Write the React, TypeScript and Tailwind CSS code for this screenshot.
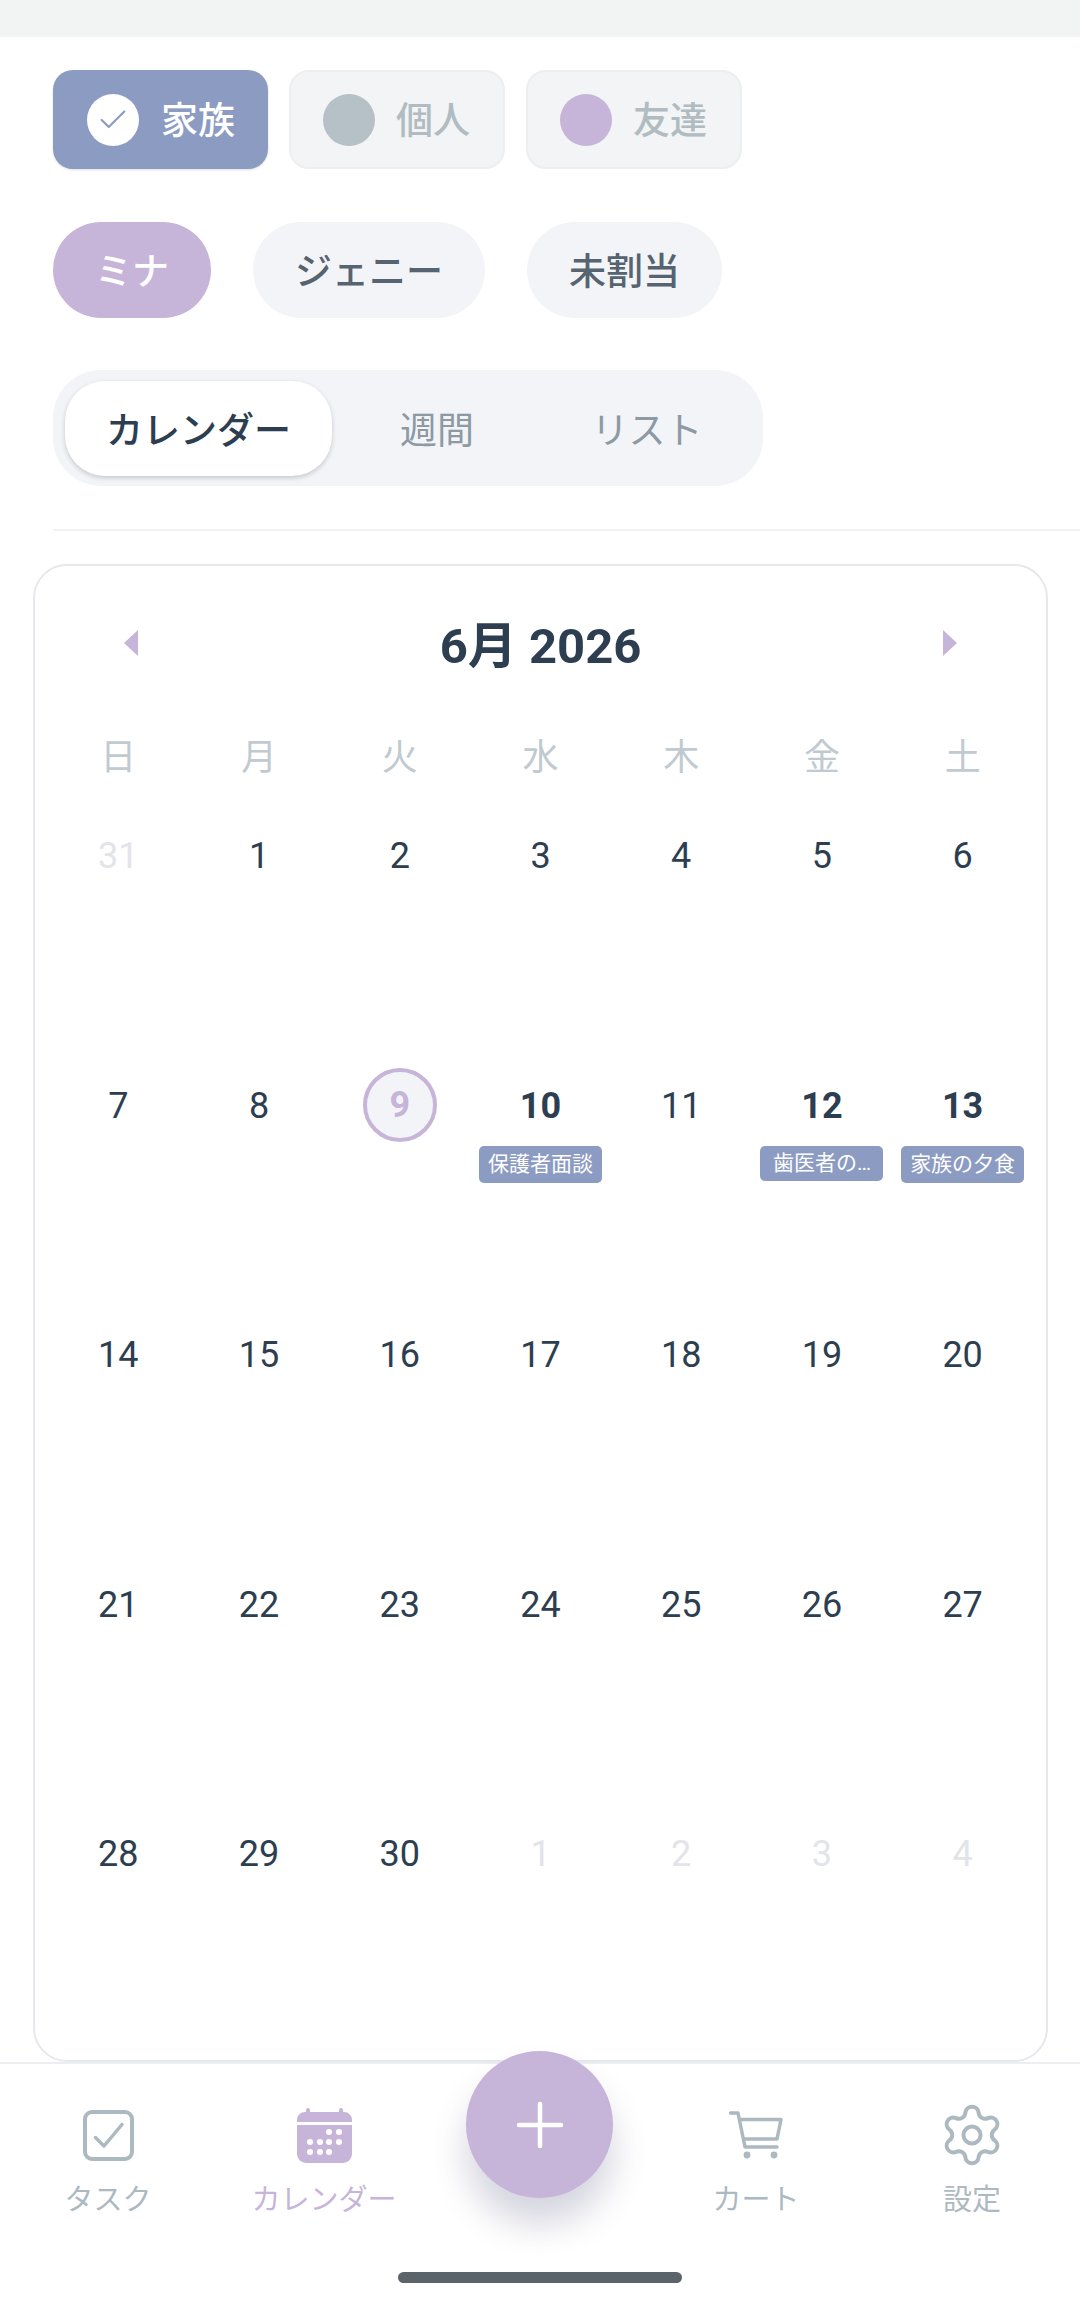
import { Check, Plus, Settings } from 'lucide-react';

const WEEKDAYS = ['日', '月', '火', '水', '木', '金', '土'];

type Day = { n: number; muted?: boolean; bold?: boolean; today?: boolean; tag?: string };

const DAYS: Day[] = [
  { n: 31, muted: true },
  ...[1, 2, 3, 4, 5, 6, 7, 8].map(n => ({ n })),
  { n: 9, today: true },
  { n: 10, bold: true, tag: '保護者面談' },
  { n: 11 },
  { n: 12, bold: true, tag: '歯医者の…' },
  { n: 13, bold: true, tag: '家族の夕食' },
  ...Array.from({ length: 17 }, (_, i) => ({ n: i + 14 })),
  ...[1, 2, 3, 4].map(n => ({ n, muted: true })),
];

function CalendarIcon() {
  return (
    <svg width="55" height="55" viewBox="0 0 55 55" fill="#c7b4d9">
      <path d="M9 2a2 2 0 0 1 4 0v2h29V2a2 2 0 0 1 4 0v2h1a8 8 0 0 1 8 8v2H0v-2a8 8 0 0 1 8-8h1z" />
      <path d="M0 17h55v29a9 9 0 0 1-9 9H9a9 9 0 0 1-9-9z" />
      <g fill="#fff">
        <circle cx="32" cy="24" r="3" />
        <circle cx="42" cy="24" r="3" />
        <circle cx="13" cy="34" r="3" />
        <circle cx="23" cy="34" r="3" />
        <circle cx="32" cy="34" r="3" />
        <circle cx="42" cy="34" r="3" />
        <circle cx="13" cy="44" r="3" />
        <circle cx="23" cy="44" r="3" />
        <circle cx="32" cy="44" r="3" />
      </g>
    </svg>
  );
}

function TaskIcon() {
  return (
    <svg width="51" height="51" viewBox="0 0 51 51" fill="none" stroke="#adb9c1" strokeWidth="4">
      <rect x="2" y="2" width="47" height="47" rx="7" />
      <path d="M12.5 27.5l8.5 8.5 18-21.5" strokeLinecap="round" strokeLinejoin="round" strokeWidth="3.5" />
    </svg>
  );
}

function CartIcon() {
  return (
    <svg width="54" height="48" viewBox="0 0 54 48" fill="none" stroke="#adb9c1" strokeWidth="3.5" strokeLinecap="round" strokeLinejoin="round">
      <path d="M1.5 2H9l7 34h32" />
      <path d="M11 8.5h41L48 28H14.5" />
      <circle cx="18" cy="44" r="3.4" fill="#adb9c1" stroke="none" />
      <circle cx="45" cy="44" r="3.4" fill="#adb9c1" stroke="none" />
    </svg>
  );
}

function NavItem({ label, icon, active }: { label: string; icon: React.ReactNode; active?: boolean }) {
  return (
    <div className="flex w-[216px] flex-col items-center">
      <div className="flex h-[60px] items-center justify-center">{icon}</div>
      <span className={'mt-[17px] text-[29px] leading-[36px] ' + (active ? 'text-[#c7b4d9]' : 'text-[#adb9c1]')}>
        {label}
      </span>
    </div>
  );
}

export default function App() {
  return (
    <div
      className="relative flex h-[2310px] w-[1080px] flex-col overflow-hidden bg-white"
      style={{ fontFamily: 'Roboto, "Noto Sans CJK JP", sans-serif' }}
    >
      <div className="h-[37px] bg-[#f2f4f3]" />

      <div className="mt-[33px] flex gap-[21px] pl-[53px]">
        <div className="flex h-[99px] w-[215px] items-center gap-[22px] rounded-[20px] bg-[#8c9bc2] pl-[34px] shadow-sm">
          <span className="flex h-[52px] w-[52px] items-center justify-center rounded-full bg-white">
            <Check size={34} strokeWidth={1.5} className="text-[#8c9bc2]" />
          </span>
          <span className="mt-[3px] text-[37px] font-medium leading-none text-white">家族</span>
        </div>
        <div className="flex h-[99px] w-[216px] items-center gap-[21px] rounded-[20px] border-2 border-[#eceeef] bg-[#f2f4f5] pl-[32px]">
          <span className="h-[52px] w-[52px] rounded-full bg-[#b5c1c7]" />
          <span className="mt-[3px] text-[37px] font-medium leading-none text-[#b0bcc2]">個人</span>
        </div>
        <div className="flex h-[99px] w-[216px] items-center gap-[21px] rounded-[20px] border-2 border-[#eceeef] bg-[#f2f4f5] pl-[32px]">
          <span className="h-[52px] w-[52px] rounded-full bg-[#c7b4d9]" />
          <span className="mt-[3px] text-[37px] font-medium leading-none text-[#b0bcc2]">友達</span>
        </div>
      </div>

      <div className="mt-[53px] flex gap-[42px] pl-[53px]">
        <div className="flex h-[96px] w-[158px] items-center justify-center rounded-[48px] bg-[#c7b4d9] pt-[6px] text-[37px] font-medium text-white">
          ミナ
        </div>
        <div className="flex h-[96px] w-[232px] items-center justify-center rounded-[48px] bg-[#f3f4f8] pt-[6px] text-[37px] font-medium text-[#566370]">
          ジェニー
        </div>
        <div className="flex h-[96px] w-[195px] items-center justify-center rounded-[48px] bg-[#f3f4f8] pt-[6px] text-[37px] font-medium text-[#566370]">
          未割当
        </div>
      </div>

      <div className="mt-[52px] ml-[53px] flex h-[116px] w-[710px] items-center rounded-[48px] bg-[#f3f4f8] pl-[12px]">
        <div className="flex h-[95px] w-[267px] items-center justify-center rounded-[40px] bg-white pt-[8px] text-[37px] font-medium text-[#2c3e50] shadow-[0_2px_5px_rgba(0,0,0,0.18)]">
          カレンダー
        </div>
        <div className="flex h-[95px] w-[210px] items-center justify-center pt-[8px] text-[37px] text-[#8d99a3]">週間</div>
        <div className="flex h-[95px] w-[210px] items-center justify-center pt-[8px] text-[37px] text-[#8d99a3]">リスト</div>
      </div>

      <div className="mt-[43px] ml-[53px] h-[2px] bg-[#f0f1f3]" />

      <div className="mt-[33px] mx-[33px] h-[1498px] w-[1015px] rounded-[34px] border-2 border-[#e6e8ec] px-[13px]">
        <div className="flex h-[155px] items-center justify-between px-[76px] pb-[1px]">
          <svg width="14" height="26" viewBox="0 0 14 26" fill="#c7b4d9">
            <path d="M14 0v26L0 13z" />
          </svg>
          <span className="mt-[6px] text-[49px] font-bold leading-none text-[#2c3e50]">6月 2026</span>
          <svg width="14" height="26" viewBox="0 0 14 26" fill="#c7b4d9">
            <path d="M0 0v26l14-13z" />
          </svg>
        </div>

        <div className="grid h-[74px] grid-cols-7 items-center">
          {WEEKDAYS.map(d => (
            <span key={d} className="text-center text-[36px] leading-none text-[#c0cad0]">
              {d}
            </span>
          ))}
        </div>

        <div className="mt-[23.5px] grid grid-cols-7 auto-rows-[249.5px]">
          {DAYS.map((d, i) => (
            <div key={i} className="flex flex-col items-center">
              {d.today ? (
                <div className="flex h-[74px] w-[74px] items-center justify-center rounded-full border-4 border-[#c7b4d9] bg-[#f3f4f8] text-[36px] font-bold text-[#c7b4d9]">
                  {d.n}
                </div>
              ) : (
                <div
                  className={
                    'flex h-[75px] items-center justify-center text-[36px] ' +
                    (d.muted ? 'text-[#e2e4e9] ' : 'text-[#2c3e50] ') +
                    (d.bold ? 'font-bold' : '')
                  }
                >
                  {d.n}
                </div>
              )}
              {d.tag && (
                <div
                  className={
                    'mt-[3px] flex w-[123px] items-center justify-center overflow-hidden whitespace-nowrap rounded-[5px] bg-[#8c9bc2] text-[21px] leading-none text-white ' +
                    (d.tag.endsWith('…') ? 'h-[35px]' : 'h-[37px]')
                  }
                >
                  {d.tag}
                </div>
              )}
            </div>
          ))}
        </div>
      </div>

      <div className="flex flex-1 border-t-2 border-[#eceef1] pt-[41px]">
        <NavItem label="タスク" icon={<TaskIcon />} />
        <NavItem label="カレンダー" active icon={<CalendarIcon />} />
        <div className="w-[216px]" />
        <NavItem label="カート" icon={<CartIcon />} />
        <NavItem label="設定" icon={<Settings size={68} strokeWidth={1.4} className="text-[#adb9c1]" />} />
      </div>

      <div className="absolute top-[2051px] left-[466px] flex h-[147px] w-[147px] items-center justify-center rounded-full bg-[#c7b4d9] shadow-[0_26px_34px_rgba(80,80,120,0.24)]">
        <Plus size={72} strokeWidth={1.5} className="text-white" />
      </div>

      <div className="absolute top-[2272px] left-[398px] h-[11px] w-[284px] rounded-full bg-[#5c646b]" />
    </div>
  );
}
